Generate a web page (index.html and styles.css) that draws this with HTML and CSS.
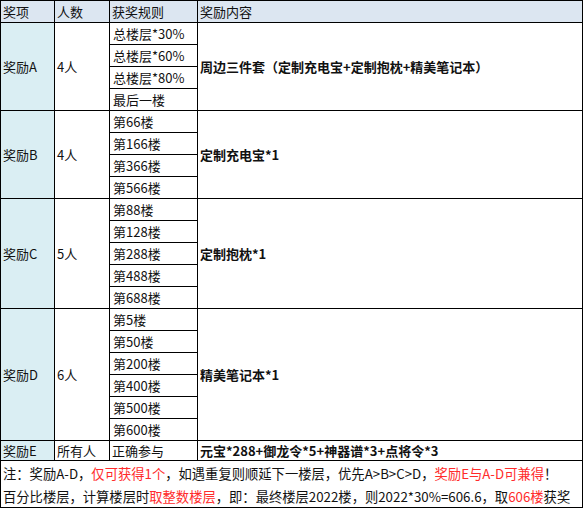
FILE: index.html
```html
<!DOCTYPE html>
<html lang="zh">
<head>
<meta charset="utf-8">
<link rel="stylesheet" href="styles.css">
</head>
<body>
<div class="sheet">
  <div class="cell head">奖项</div>
  <div class="cell head">人数</div>
  <div class="cell head">获奖规则</div>
  <div class="cell head">奖励内容</div>

  <div class="cell tier r4">奖励A</div>
  <div class="cell r4">4人</div>
  <div class="cell c3">总楼层*30%</div>
  <div class="cell bold r4">周边三件套（定制充电宝+定制抱枕+精美笔记本）</div>
  <div class="cell c3">总楼层*60%</div>
  <div class="cell c3">总楼层*80%</div>
  <div class="cell c3">最后一楼</div>

  <div class="cell tier r4">奖励B</div>
  <div class="cell r4">4人</div>
  <div class="cell c3">第66楼</div>
  <div class="cell bold r4">定制充电宝*1</div>
  <div class="cell c3">第166楼</div>
  <div class="cell c3">第366楼</div>
  <div class="cell c3">第566楼</div>

  <div class="cell tier r5">奖励C</div>
  <div class="cell r5">5人</div>
  <div class="cell c3">第88楼</div>
  <div class="cell bold r5">定制抱枕*1</div>
  <div class="cell c3">第128楼</div>
  <div class="cell c3">第288楼</div>
  <div class="cell c3">第488楼</div>
  <div class="cell c3">第688楼</div>

  <div class="cell tier r6">奖励D</div>
  <div class="cell r6">6人</div>
  <div class="cell c3">第5楼</div>
  <div class="cell bold r6">精美笔记本*1</div>
  <div class="cell c3">第50楼</div>
  <div class="cell c3">第200楼</div>
  <div class="cell c3">第400楼</div>
  <div class="cell c3">第500楼</div>
  <div class="cell c3">第600楼</div>

  <div class="cell tier">奖励E</div>
  <div class="cell">所有人</div>
  <div class="cell">正确参与</div>
  <div class="cell bold">元宝*288+御龙令*5+神器谱*3+点将令*3</div>

  <div class="cell note">
    <p>注：奖励A-D，<span class="red">仅可获得1个</span>，如遇重复则顺延下一楼层，优先A&gt;B&gt;C&gt;D，<span class="red">奖励E与A-D可兼得</span>！</p>
    <p>百分比楼层，计算楼层时<span class="red">取整数楼层</span>，即：最终楼层2022楼，则2022*30%=606.6，取<span class="red">606楼</span>获奖</p>
  </div>
</div>
</body>
</html>
```

FILE: styles.css
```css
html, body {
  margin: 0;
  padding: 0;
  background: #ffffff;
}

body {
  font-family: "Noto Sans CJK SC", "Noto Sans", sans-serif;
  color: #111111;
}

.sheet {
  display: grid;
  grid-template-columns: 54px 55px 88px 385px;
  grid-template-rows: 22px repeat(19, 22px) 20px 47px;
  width: max-content;
  border-top: 1px solid #000000;
  border-left: 1px solid #000000;
}

.cell {
  box-sizing: border-box;
  display: flex;
  align-items: center;
  padding: 0 2px;
  border-right: 1px solid #000000;
  border-bottom: 1px solid #000000;
  font-size: 13px;
  line-height: 16px;
  white-space: nowrap;
}

.c3 {
  grid-column: 3;
  padding-left: 3px;
}

.head {
  background: #dce6f1;
}

.tier {
  background: #daeef3;
}

.bold {
  font-weight: 700;
}

.r4 { grid-row: span 4; }
.r5 { grid-row: span 5; }
.r6 { grid-row: span 6; }

.note {
  grid-column: 1 / -1;
  display: block;
  padding: 1px 2px 0 2px;
  font-size: 13.3px;
  overflow: hidden;
}

.note p {
  margin: 0;
  line-height: 23px;
}

.red {
  color: #ff2b2b;
}
```
